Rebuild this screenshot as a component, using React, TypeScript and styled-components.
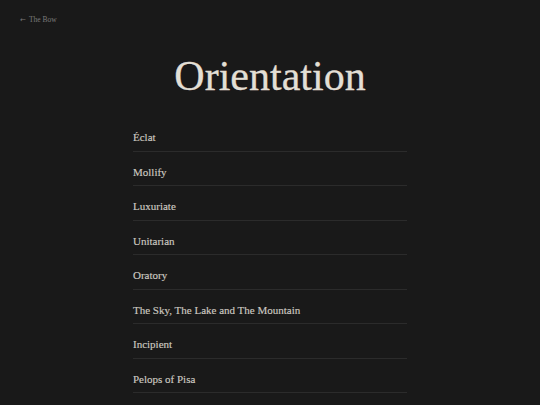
import React from 'react';
import styled, { createGlobalStyle } from 'styled-components';

const GlobalStyle = createGlobalStyle`
  html, body {
    margin: 0;
    padding: 0;
    background: #191919;
  }
  body {
    font-family: "Liberation Serif", "Times New Roman", serif;
    -webkit-font-smoothing: antialiased;
  }
`;

const entries = [
  'Éclat',
  'Mollify',
  'Luxuriate',
  'Unitarian',
  'Oratory',
  'The Sky, The Lake and The Mountain',
  'Incipient',
  'Pelops of Pisa',
];

function App() {
  return (
    <>
      <GlobalStyle />
      <Page>
        <BackLink href="#">
          <Arrow>←</Arrow>The Bow
        </BackLink>
        <Title>Orientation</Title>
        <EntryList>
          {entries.map((name) => (
            <Entry key={name}>
              <EntryLink href="#">{name}</EntryLink>
            </Entry>
          ))}
        </EntryList>
      </Page>
    </>
  );
}

const Page = styled.div`
  min-height: 405px;
  box-sizing: border-box;
  padding: 15px 20px 0;
  display: flex;
  flex-direction: column;
  background: #191919;
`;

const BackLink = styled.a`
  align-self: flex-start;
  font-size: 7.5px;
  line-height: 10px;
  color: #7a7a7a;
  text-decoration: none;
`;

const Arrow = styled.span`
  font-family: "DejaVu Sans", sans-serif;
  font-size: 7px;
  margin-right: 3px;
`;

const Title = styled.h1`
  margin: 27px 0 0;
  text-align: center;
  font-size: 42px;
  line-height: 48px;
  font-weight: 400;
  color: #e3dfd5;
  -webkit-text-stroke: 0.3px #e3dfd5;
`;

const EntryList = styled.ul`
  list-style: none;
  margin: 17px auto 0;
  padding: 0;
  width: 274px;
`;

const Entry = styled.li`
  padding: 14px 0 6.5px;
  border-bottom: 1px solid #2b2b2b;
`;

const EntryLink = styled.a`
  display: block;
  font-size: 11px;
  line-height: 13px;
  color: #cdc9c1;
  text-decoration: none;
  -webkit-text-stroke: 0.15px #cdc9c1;
`;

export default App;
